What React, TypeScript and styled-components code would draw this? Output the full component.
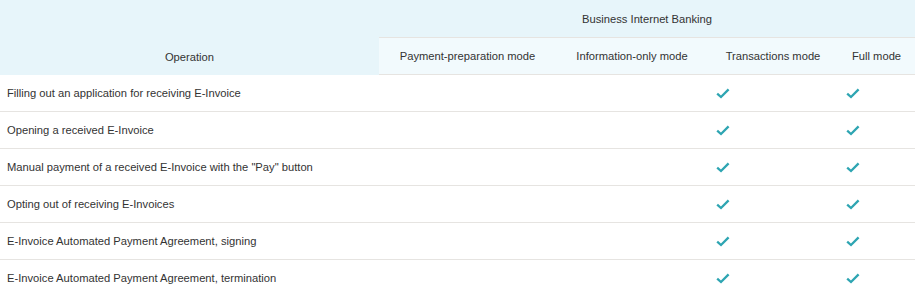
import React from "react";
import styled, { createGlobalStyle } from "styled-components";

const Global = createGlobalStyle`
  html, body { margin: 0; padding: 0; background: #fff; }
  body { font-family: "Liberation Sans", Arial, sans-serif; }
`;

const Table = styled.table`
  width: 915px;
  border-collapse: collapse;
  table-layout: fixed;
  font-size: 11.2px;
  color: #333;
`;

const HeadCell = styled.th<{ $sub?: boolean }>`
  font-weight: normal;
  text-align: center;
  height: ${(p) => (p.$sub ? 36 : 37)}px;
  padding: 0;
  background: ${(p) => (p.$sub ? "#f2fafd" : "#e7f5fa")};
  border-top: ${(p) => (p.$sub ? "1px solid #e6e4e1" : "none")};
  border-bottom: ${(p) => (p.$sub ? "1px solid #e6e4e1" : "none")};
  vertical-align: middle;
`;

const OpHead = styled(HeadCell)`
  vertical-align: bottom;
  padding-bottom: 12px;
`;

const Row = styled.tr`
  border-bottom: 1px solid #e6e4e1;
  &:last-child { border-bottom: none; }
`;

const Cell = styled.td`
  height: 36px;
  padding: 0 8px 0 7px;
  text-align: left;
  vertical-align: middle;
`;

const Check = () => (
  <svg width="14" height="11" viewBox="0 0 14 11" style={{ display: "block", marginLeft: 1 }}>
    <path d="M1.2 5.6 L5 9 L12.6 1.4" fill="none" stroke="#2ea5b2" strokeWidth="2.3" />
  </svg>
);

const rows = [
  "Filling out an application for receiving E-Invoice",
  "Opening a received E-Invoice",
  'Manual payment of a received E-Invoice with the "Pay" button',
  "Opting out of receiving E-Invoices",
  "E-Invoice Automated Payment Agreement, signing",
  "E-Invoice Automated Payment Agreement, termination",
];

export default function App() {
  return (
    <>
      <Global />
      <Table>
        <colgroup>
          <col style={{ width: 379 }} />
          <col style={{ width: 177 }} />
          <col style={{ width: 152 }} />
          <col style={{ width: 130 }} />
          <col style={{ width: 77 }} />
        </colgroup>
        <thead>
          <tr>
            <OpHead rowSpan={2}>Operation</OpHead>
            <HeadCell colSpan={4}>Business Internet Banking</HeadCell>
          </tr>
          <tr>
            <HeadCell $sub>Payment-preparation mode</HeadCell>
            <HeadCell $sub>Information-only mode</HeadCell>
            <HeadCell $sub>Transactions mode</HeadCell>
            <HeadCell $sub>Full mode</HeadCell>
          </tr>
        </thead>
        <tbody>
          {rows.map((r) => (
            <Row key={r}>
              <Cell>{r}</Cell>
              <Cell />
              <Cell />
              <Cell><Check /></Cell>
              <Cell><Check /></Cell>
            </Row>
          ))}
        </tbody>
      </Table>
    </>
  );
}
